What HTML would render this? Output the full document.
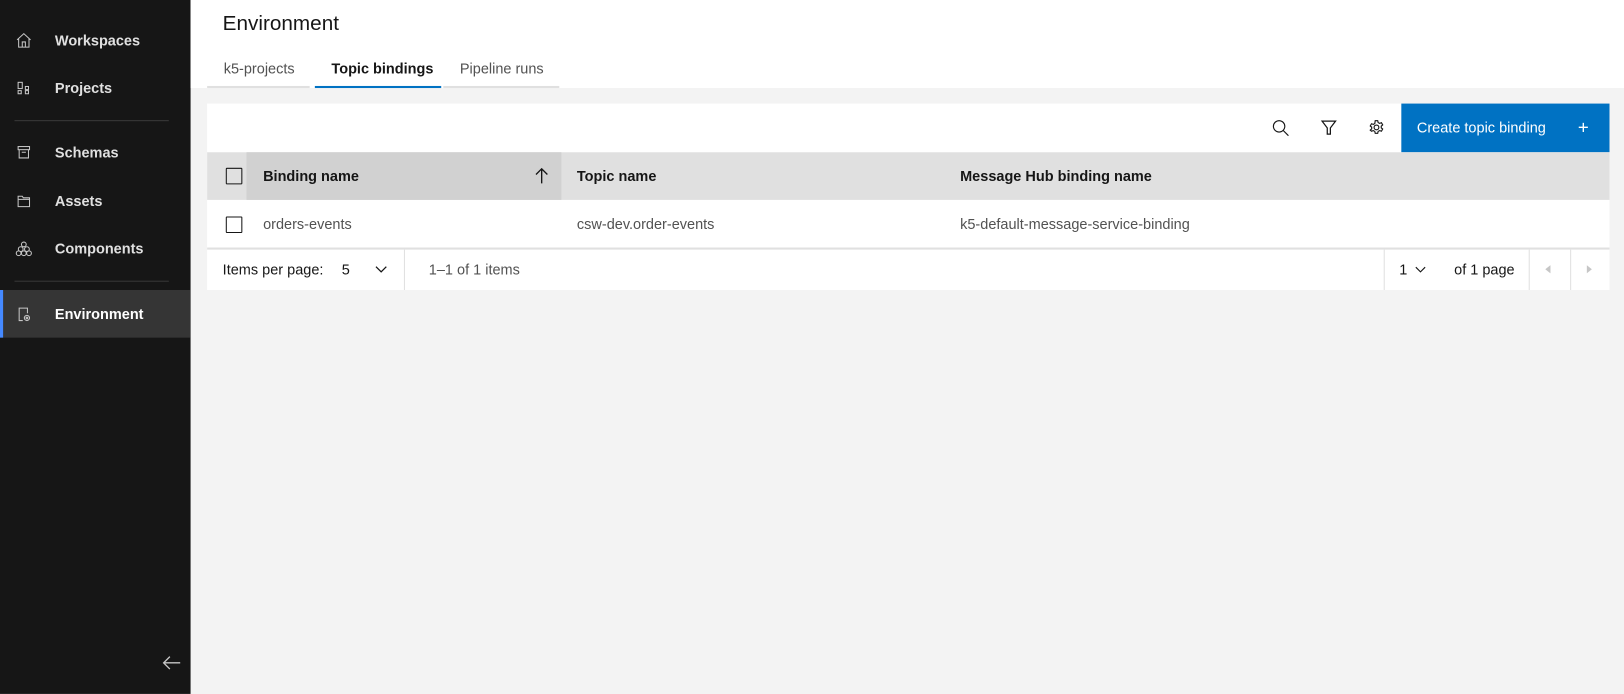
<!DOCTYPE html>
<html><head><style>
*{box-sizing:border-box;margin:0;padding:0}
html,body{width:1624px;height:694px;overflow:hidden;background:#f3f3f3}
#w{width:1568px;height:670px;transform:scale(1.035714);transform-origin:0 0;position:relative;font-family:"Liberation Sans",sans-serif;font-size:14px;color:#161616}
.side{position:absolute;left:0;top:0;width:184px;height:670px;background:#161616}
.it{position:absolute;left:0;width:184px;height:46px;color:#e0e0e0;font-weight:bold;font-size:14px;line-height:46px;padding-left:53px}
.it svg{position:absolute;left:15px;top:15px}
.div{position:absolute;left:14px;width:149px;height:1px;background:#393939}
.sel{background:#353535;color:#fff;border-left:3px solid #4589ff;padding-left:50px}
.sel svg{left:12px}
.hdr{position:absolute;left:184px;top:0;right:0;height:85px;background:#fff}
h1{position:absolute;left:215px;top:12px;font-weight:normal;font-size:20px;color:#161616}
.tab{position:absolute;top:55px;height:30px;line-height:22px;border-bottom:2px solid #e0e0e0;color:#525252;padding-left:16px}
.abs{position:absolute}
.card{position:absolute;left:200px;top:100px;width:1354px;height:180px;background:#fff}
.th{position:absolute;top:47px;height:46px;line-height:46px;font-weight:bold}
.td{position:absolute;top:93px;height:46px;line-height:46px;color:#525252}
.cb{position:absolute;width:16px;height:16px;border:1.5px solid #161616;border-radius:1px}
</style></head><body><div id="w">
<div class="side">
<div class="it" style="top:16px"><svg width="16" height="16" viewBox="0 0 16 16" fill="none" stroke="#c6c6c6" stroke-width="1"><path d="M1.5 7.5L8 1.5l6.5 6M3 6.5v8h10v-8M6.5 14.5v-5h3v5"/></svg>Workspaces</div>
<div class="it" style="top:62px"><svg width="16" height="16" viewBox="0 0 16 16" fill="none" stroke="#c6c6c6"><rect x="2.5" y="2.5" width="4" height="6"/><rect x="9.5" y="6.5" width="3" height="3"/><rect x="2.5" y="10.5" width="3" height="3"/><rect x="9.5" y="10.5" width="3" height="3"/></svg>Projects</div>
<div class="div" style="top:116px"></div>
<div class="it" style="top:124px"><svg width="16" height="16" viewBox="0 0 16 16" fill="none" stroke="#c6c6c6"><rect x="2.5" y="2.5" width="11" height="3"/><path d="M3.5 5.5v8h9v-8M6 8h4"/></svg>Schemas</div>
<div class="it" style="top:171px"><svg width="16" height="16" viewBox="0 0 16 16" fill="none" stroke="#c6c6c6"><path d="M2.5 3.5h4l1 1.5h6v8.5h-11zM2.5 6.5h11"/></svg>Assets</div>
<div class="it" style="top:217px"><svg width="16" height="16" viewBox="0 0 16 16" fill="none" stroke="#c6c6c6"><circle cx="8" cy="4" r="2.3"/><circle cx="5" cy="8.5" r="2.3"/><circle cx="11" cy="8.5" r="2.3"/><circle cx="3" cy="12.5" r="2.3"/><circle cx="8" cy="12.5" r="2.3"/><circle cx="13" cy="12.5" r="2.3"/></svg>Components</div>
<div class="div" style="top:271px"></div>
<div class="it sel" style="top:280px"><svg width="16" height="16" viewBox="0 0 16 16" fill="none" stroke="#c6c6c6"><path d="M7 14.5H3.5v-12h8v5"/><circle cx="11" cy="12" r="2.5"/><circle cx="11" cy="12" r=".8"/></svg>Environment</div>
<svg class="abs" style="left:156px;top:632px" width="20" height="16" viewBox="0 0 20 16" fill="none" stroke="#c6c6c6" stroke-width="1.3"><path d="M18 8H2M8 2L2 8l6 6"/></svg>
</div>
<div class="hdr"></div>
<h1>Environment</h1>
<div class="tab" style="left:200px;width:99px">k5-projects</div>
<div class="tab" style="left:304px;width:122px;color:#161616;font-weight:bold;border-bottom-color:#0072c3">Topic bindings</div>
<div class="tab" style="left:428px;width:112px">Pipeline runs</div>
<div class="card">
<svg class="abs" style="left:1028px;top:15px" width="17" height="17" viewBox="0 0 17 17" fill="none" stroke="#161616" stroke-width="1.1"><circle cx="7" cy="7" r="5.5"/><path d="M11 11l5 5"/></svg>
<svg class="abs" style="left:1075px;top:15px" width="16" height="17" viewBox="0 0 16 17" fill="none" stroke="#161616" stroke-width="1.2"><path d="M1.5 2h13L9.5 8.5v6h-3v-6z"/></svg>
<svg class="abs" style="left:1121px;top:15px" width="16" height="16" viewBox="0 0 16 16" fill="none" stroke="#161616" stroke-width="1.1"><circle cx="8" cy="8" r="2.3"/><path d="M6.8 1.5h2.4l.4 1.8 1.4.8 1.8-.6 1.2 2.1-1.4 1.2v1.6l1.4 1.2-1.2 2.1-1.8-.6-1.4.8-.4 1.8H6.8l-.4-1.8-1.4-.8-1.8.6L2 10.6l1.4-1.2V7.8L2 6.6l1.2-2.1 1.8.6 1.4-.8z"/></svg>
<div class="abs" style="left:1153px;top:0;width:201px;height:47px;background:#0072c3;color:#fff;line-height:47px;padding-left:15px">Create topic binding<span style="position:absolute;right:20px;font-size:18px">+</span></div>
<div class="abs" style="left:0;top:47px;width:1354px;height:46px;background:#e0e0e0"></div>
<div class="abs" style="left:38px;top:47px;width:304px;height:46px;background:#d1d1d1"></div>
<div class="cb" style="left:18px;top:62px"></div>
<div class="th" style="left:54px">Binding name</div>
<svg class="abs" style="left:316px;top:62px" width="14" height="16" viewBox="0 0 14 16" fill="none" stroke="#161616" stroke-width="1.3"><path d="M7 15V1M1.5 6.5L7 1l5.5 5.5"/></svg>
<div class="th" style="left:357px">Topic name</div>
<div class="th" style="left:727px">Message Hub binding name</div>
<div class="cb" style="left:18px;top:109px"></div>
<div class="td" style="left:54px">orders-events</div>
<div class="td" style="left:357px">csw-dev.order-events</div>
<div class="td" style="left:727px">k5-default-message-service-binding</div>
<div class="abs" style="left:0;top:139px;width:1354px;height:2px;background:#e0e0e0"></div>
<div class="abs" style="left:15px;top:141px;line-height:39px">Items per page:</div>
<div class="abs" style="left:130px;top:141px;line-height:39px">5</div>
<svg class="abs" style="left:162px;top:156px" width="12" height="8" viewBox="0 0 12 8" fill="none" stroke="#161616" stroke-width="1.2"><path d="M1 1.5l5 5 5-5"/></svg>
<div class="abs" style="left:190px;top:141px;width:1px;height:39px;background:#e0e0e0"></div>
<div class="abs" style="left:214px;top:141px;line-height:39px;color:#525252">1–1 of 1 items</div>
<div class="abs" style="left:1136px;top:141px;width:1px;height:39px;background:#e0e0e0"></div>
<div class="abs" style="left:1151px;top:141px;line-height:39px">1</div>
<svg class="abs" style="left:1166px;top:157px" width="11" height="7" viewBox="0 0 11 7" fill="none" stroke="#161616" stroke-width="1.1"><path d="M1 1l4.5 4.5L10 1"/></svg>
<div class="abs" style="left:1204px;top:141px;line-height:39px">of 1 page</div>
<div class="abs" style="left:1276px;top:141px;width:1px;height:39px;background:#e0e0e0"></div>
<div class="abs" style="left:1316px;top:141px;width:1px;height:39px;background:#e0e0e0"></div>
<svg class="abs" style="left:1292px;top:156px" width="6" height="8"><path d="M5 0v8L0 4z" fill="#c6c6c6"/></svg>
<svg class="abs" style="left:1332px;top:156px" width="6" height="8"><path d="M0 0v8l5-4z" fill="#c6c6c6"/></svg>
</div>
</div></body></html>
